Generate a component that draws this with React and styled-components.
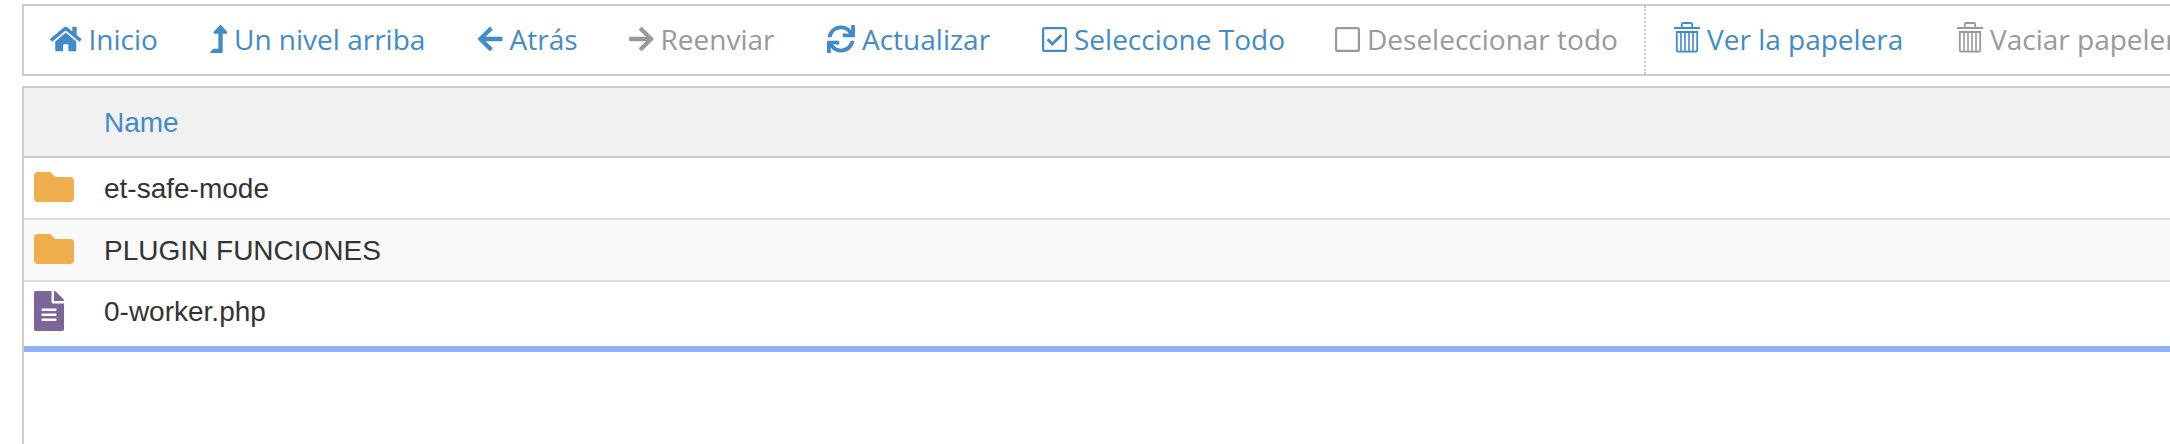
import React from "react";
import styled, { createGlobalStyle } from "styled-components";
import {
  FaHome,
  FaLevelUpAlt,
  FaArrowLeft,
  FaArrowRight,
  FaSync,
  FaFolder,
  FaFileAlt,
} from "react-icons/fa";

const GlobalStyle = createGlobalStyle`
  *, *::before, *::after { box-sizing: border-box; }
  body { margin: 0; background: #fff; overflow: hidden; }
`;

const Page = styled.main`
  display: flex;
  flex-direction: column;
  gap: 10px;
  height: 444px;
  padding: 4px 0 0 22px;
  overflow: hidden;
`;

const Toolbar = styled.nav`
  display: flex;
  flex: none;
  height: 72px;
  border: 2px solid #ccc;
  border-right: 0;
  overflow: hidden;
`;

const Group = styled.div`
  display: flex;
  flex: none;
  padding-left: 26px;
  & + & {
    border-left: 2px dotted #ccc;
    padding-left: 28px;
  }
`;

const Action = styled.button`
  display: flex;
  flex: none;
  align-items: center;
  gap: 7px;
  width: ${(p) => p.$width}px;
  padding: 0 0 2px;
  border: 0;
  background: none;
  color: ${(p) => (p.$disabled ? "#999" : "#428bca")};
  font: 28px/38px "Open Sans", sans-serif;
  text-align: left;
  white-space: nowrap;
`;

const IconSlot = styled.span`
  display: flex;
  flex: none;
  svg {
    display: block;
    width: ${(p) => p.$width}px;
    height: ${(p) => p.$height || 28}px;
  }
`;

const Table = styled.section`
  flex: 1;
  border: 2px solid #ccc;
  border-width: 2px 0 0 2px;
  color: #333;
  font: 28px/40px "Liberation Sans", Arial, sans-serif;
`;

const HeaderRow = styled.header`
  display: flex;
  align-items: center;
  height: 70px;
  padding: 2px 0 0 80px;
  border-bottom: 2px solid #ccc;
  background: #f1f1f1;
  color: #428bca;
`;

const Row = styled.div`
  display: flex;
  align-items: center;
  height: ${(p) => (p.$last ? 70 : 62)}px;
  padding: 0 0 ${(p) => (p.$last ? 6 : 0)}px 10px;
  border-bottom: ${(p) => (p.$last ? "6px solid #8cb1f9" : "2px solid #ddd")};
  background: ${(p) => (p.$striped ? "#f9f9f9" : "#fff")};
`;

const FileIcon = styled.span`
  display: flex;
  width: 70px;
  padding-bottom: ${(p) => (p.$folder ? 2 : 0)}px;
  color: ${(p) => (p.$folder ? "#f0ad4e" : "#7d6599")};
  svg {
    width: ${(p) => (p.$folder ? 40 : 30)}px;
    height: 40px;
  }
`;

const FileName = styled.span`
  padding-top: 2px;
`;

const Checkbox = ({ checked }) => (
  <svg viewBox="0 0 25 28" fill="none" stroke="currentColor">
    <rect x="1.1" y="3.1" width="22.8" height="22.8" rx="1.5" strokeWidth="2.2" />
    {checked && <path d="M5.6 14.2l4.8 4.8 9-9" strokeWidth="2.8" />}
  </svg>
);

const Trash = () => (
  <svg viewBox="0 0 26 34" fill="none" stroke="currentColor" strokeWidth="1.8">
    <path d="M0 6h26" strokeWidth="2" />
    <path d="M7.8 5.5V2.6q0-1.6 1.6-1.6h7.2q1.6 0 1.6 1.6v2.9" />
    <path d="M2.8 10h20.4v18q0 1.600-1.600 1.600H4.400q-1.600 0-1.600-1.600z" />
    <path d="M7 10v19.500M11 10v19.500M15 10v19.500M19 10v19.500" strokeWidth="1.600" />
  </svg>
);

const navigation = [
  { label: "Inicio", icon: <FaHome />, iconWidth: 31.5, width: 159.5 },
  { label: "Un nivel arriba", icon: <FaLevelUpAlt />, iconWidth: 17.5, width: 268.5 },
  { label: "Atrás", icon: <FaArrowLeft />, iconWidth: 24.5, width: 151 },
  { label: "Reenviar", icon: <FaArrowRight />, iconWidth: 24.5, width: 198, disabled: true },
  { label: "Actualizar", icon: <FaSync />, iconWidth: 28, width: 215 },
  { label: "Seleccione Todo", icon: <Checkbox checked />, iconWidth: 25, width: 293 },
  { label: "Deseleccionar todo", icon: <Checkbox />, iconWidth: 25, width: 309, disabled: true },
];

const trash = [
  { label: "Ver la papelera", icon: <Trash />, iconWidth: 26, iconHeight: 34, width: 283 },
  { label: "Vaciar papelera", icon: <Trash />, iconWidth: 26, iconHeight: 34, width: 283, disabled: true },
];

const files = [
  { name: "et-safe-mode", folder: true },
  { name: "PLUGIN FUNCIONES", folder: true },
  { name: "0-worker.php", folder: false },
];

const ActionGroup = ({ items }) => (
  <Group>
    {items.map((item) => (
      <Action key={item.label} $width={item.width} $disabled={item.disabled}>
        <IconSlot $width={item.iconWidth} $height={item.iconHeight}>{item.icon}</IconSlot>
        <span>{item.label}</span>
      </Action>
    ))}
  </Group>
);

export default function App() {
  return (
    <>
      <GlobalStyle />
      <Page>
        <Toolbar>
          <ActionGroup items={navigation} />
          <ActionGroup items={trash} />
        </Toolbar>
        <Table>
          <HeaderRow>Name</HeaderRow>
          {files.map((file, i) => (
            <Row key={file.name} $striped={i % 2 === 1} $last={i === files.length - 1}>
              <FileIcon $folder={file.folder}>{file.folder ? <FaFolder /> : <FaFileAlt />}</FileIcon>
              <FileName>{file.name}</FileName>
            </Row>
          ))}
        </Table>
      </Page>
    </>
  );
}
